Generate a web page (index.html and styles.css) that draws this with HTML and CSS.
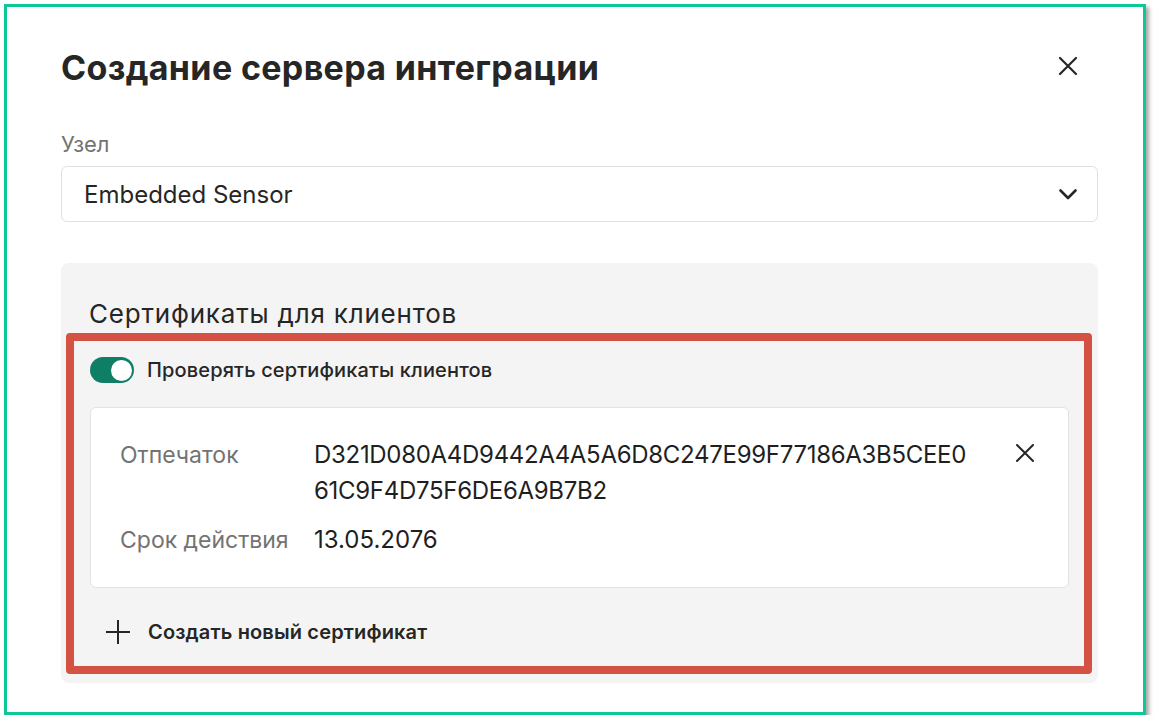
FILE: index.html
```html
<!DOCTYPE html>
<html lang="ru">

<head>
    <meta charset="UTF-8">
    <meta name="viewport" content="width=device-width, initial-scale=1.0">
    <title>Создание сервера интеграции</title>
    <link rel="stylesheet" href="styles.css">
</head>

<body>
    <div class="frame">
        <div class="dialog">
            <div class="dialog-header">
                <h1>Создание сервера интеграции</h1>
                <button class="icon-btn header-close" aria-label="Закрыть">
                    <svg width="20" height="20" viewBox="0 0 20 20">
                        <path d="M2 2L18 18M18 2L2 18" stroke="#262626" stroke-width="2.2" stroke-linecap="round" />
                    </svg>
                </button>
            </div>

            <label class="field-label" for="nodeSelect">Узел</label>
            <div class="select" id="nodeSelect">
                <span>Embedded Sensor</span>
                <svg width="20" height="14" viewBox="0 0 20 14">
                    <path d="M2.5 3.5L10 11L17.5 3.5" fill="none" stroke="#262626" stroke-width="2.6" stroke-linecap="round" stroke-linejoin="round" />
                </svg>
            </div>

            <div class="panel">
                <h2>Сертификаты для клиентов</h2>
                <div class="highlight">
                    <div class="switch-row">
                        <span class="switch on"><span class="knob"></span></span>
                        <span>Проверять сертификаты клиентов</span>
                    </div>

                    <div class="cert-card">
                        <span class="cert-label">Отпечаток</span>
                        <span class="cert-value hash">D321D080A4D9442A4A5A6D8C247E99F77186A3B5CEE061C9F4D75F6DE6A9B7B2</span>
                        <button class="icon-btn cert-remove" aria-label="Удалить">
                            <svg width="20" height="20" viewBox="0 0 20 20">
                                <path d="M2 2L18 18M18 2L2 18" stroke="#262626" stroke-width="2" stroke-linecap="round" />
                            </svg>
                        </button>
                        <span class="cert-label">Срок действия</span>
                        <span class="cert-value">13.05.2076</span>
                    </div>

                    <button class="add-btn">
                        <svg width="26" height="26" viewBox="0 0 26 26">
                            <path d="M13 1V25M1 13H25" stroke="#262626" stroke-width="2" />
                        </svg>
                        <span>Создать новый сертификат</span>
                    </button>
                </div>
            </div>
        </div>
    </div>
</body>

</html>
```

FILE: styles.css
```css
body {
    margin: 0;
    background-color: #fff;
    font-family: Inter, "Noto Sans", sans-serif;
    color: #262626;
}

.frame {
    margin: 4px 0 0 4px;
    width: 1142px;
    height: 711px;
    box-sizing: border-box;
    border: 3px solid #0bc894;
    box-shadow: 3px 3px 4px rgba(0, 0, 0, 0.35);
    padding: 39px 45px 0 54px;
}

.icon-btn {
    display: flex;
    align-items: center;
    justify-content: center;
    width: 24px;
    height: 24px;
    padding: 0;
    background: none;
    border: none;
    cursor: pointer;
}

.dialog-header {
    display: flex;
    align-items: center;
    justify-content: space-between;
}

.dialog-header h1 {
    margin: 0;
    font-size: 34px;
    line-height: 44px;
    font-weight: 700;
    letter-spacing: 0.35px;
}

.header-close {
    margin-right: 18px;
    margin-bottom: 5px;
}

.field-label {
    display: block;
    margin-top: 40px;
    font-size: 22px;
    line-height: 28px;
    color: #737373;
}

.select {
    margin-top: 8px;
    height: 56px;
    box-sizing: border-box;
    border: 1px solid #e0e0e0;
    border-radius: 6px;
    display: flex;
    align-items: center;
    justify-content: space-between;
    padding: 0 19px 0 22px;
    font-size: 24px;
}

.panel {
    margin-top: 41px;
    background-color: #f4f4f4;
    border-radius: 8px;
    padding: 35px 6px 9px 5px;
}

.panel h2 {
    margin: 0 0 3px 23px;
    font-size: 26px;
    line-height: 32px;
    font-weight: 400;
    letter-spacing: 0.8px;
}

.highlight {
    border: 8px solid #d35244;
    border-radius: 4px;
    padding: 16px 15px 21px 16px;
}

.switch-row {
    display: flex;
    align-items: center;
    gap: 13px;
    height: 26px;
    font-size: 20px;
    line-height: 26px;
    font-weight: 500;
    letter-spacing: 0.15px;
}

.switch {
    display: flex;
    align-items: center;
    justify-content: flex-start;
    width: 44px;
    height: 26px;
    box-sizing: border-box;
    padding: 3px 2px;
    border-radius: 13px;
    background-color: #c4c4c4;
}

.switch.on {
    justify-content: flex-end;
    background-color: #0e7e65;
}

.knob {
    width: 21px;
    height: 21px;
    border-radius: 50%;
    background-color: #fff;
}

.cert-card {
    margin-top: 24px;
    background-color: #fff;
    border: 1px solid #e3e3e3;
    border-radius: 6px;
    padding: 29px 31px 29px 29px;
    display: grid;
    grid-template-columns: 194px minmax(0, 658px) 1fr;
    row-gap: 13px;
}

.cert-label {
    font-size: 23px;
    line-height: 36px;
    color: #737373;
}

.cert-value {
    font-size: 24px;
    line-height: 36px;
    color: #1f1f1f;
}

.hash {
    word-break: break-all;
    letter-spacing: -0.3px;
}

.cert-remove {
    justify-self: end;
    margin-top: 4px;
}

.add-btn {
    margin-top: 31px;
    display: flex;
    align-items: center;
    gap: 17px;
    padding: 0 0 0 15px;
    background: none;
    border: none;
    font-family: inherit;
    font-size: 20px;
    line-height: 26px;
    font-weight: 600;
    letter-spacing: 0.15px;
    color: #262626;
    cursor: pointer;
}
```
